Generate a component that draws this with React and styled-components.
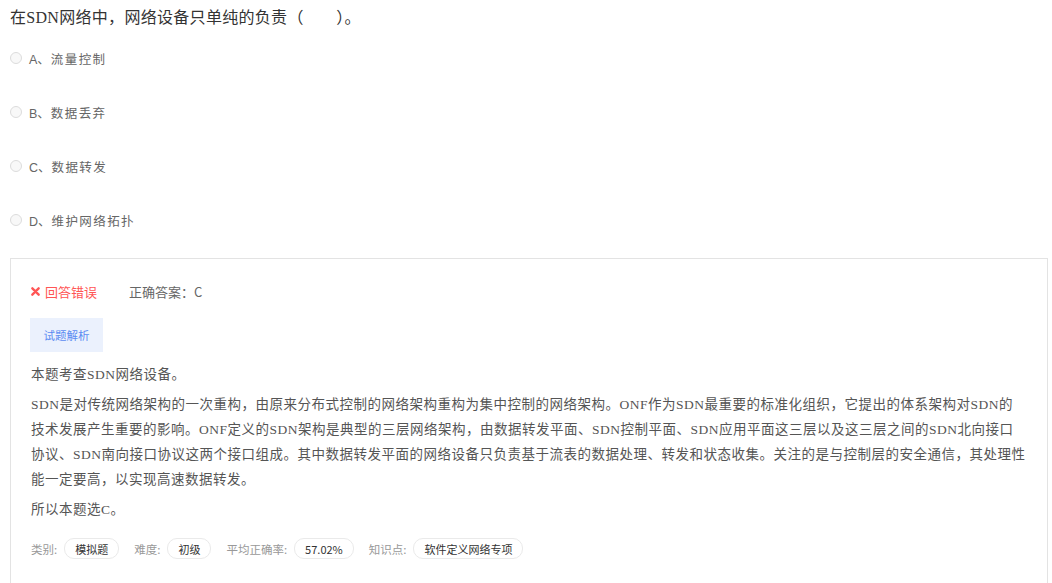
import React from 'react';
import styled, { createGlobalStyle } from 'styled-components';

const GlobalStyle = createGlobalStyle`
  body {
    margin: 0;
    background: #fff;
    font-family: "Liberation Serif", "Noto Sans CJK SC", serif;
  }
`;

const Page = styled.div`
  padding: 0 4px 0 10px;
`;

const Title = styled.div`
  font-size: 16px;
  line-height: 22px;
  color: #333;
  padding-top: 7px;
  letter-spacing: 0.3px;
  font-family: "Liberation Serif", "Noto Sans CJK SC", serif;
`;

const Options = styled.div`
  display: flex;
  flex-direction: column;
  gap: 34px;
  margin-top: 19px;
`;

const Option = styled.label`
  display: flex;
  align-items: center;
  height: 20px;
  font-family: "Liberation Sans", "Noto Sans CJK SC", sans-serif;
  font-size: 12.5px;
  letter-spacing: 1.4px;
  color: #666;
`;

const Radio = styled.span`
  width: 10px;
  height: 10px;
  border: 1px solid #dcdcdc;
  border-radius: 50%;
  background: #f8f8f8;
  margin-right: 7px;
  flex-shrink: 0;
`;

const Letter = styled.span`
  color: #666;
  letter-spacing: 0;
  margin-right: 1px;
`;

const ResultBox = styled.div`
  margin-top: 28px;
  border: 1px solid #e3e3e3;
  border-bottom: none;
  padding: 22px 20px 40px 19px;
  min-height: 300px;
`;

const StatusRow = styled.div`
  display: flex;
  align-items: center;
  height: 20px;
  font-family: "Noto Sans CJK SC", sans-serif;
  font-size: 13px;
`;

const Wrong = styled.span`
  display: flex;
  align-items: center;
  color: #ff5555;
  margin-right: 32px;
  margin-left: 1px;
`;

const Answer = styled.span`
  color: #666;
`;

const AnalysisButton = styled.button`
  margin-top: 17px;
  width: 73px;
  height: 34px;
  border: none;
  background: #ebf1fd;
  color: #5c8cf2;
  font-family: "Noto Sans CJK SC", sans-serif;
  font-size: 11.5px;
  padding: 0;
  cursor: pointer;
`;

const Analysis = styled.div`
  margin-top: 10px;
  padding-left: 1px;
  font-size: 13.5px;
  line-height: 25px;
  letter-spacing: 0.5px;
  color: #555;
  font-family: "Liberation Serif", "Noto Sans CJK SC", serif;

  p {
    margin: 0 0 5px;
  }
`;

const Meta = styled.div`
  display: flex;
  align-items: center;
  margin-top: 16px;
  padding-left: 1px;
  font-family: "Noto Sans CJK SC", sans-serif;
  font-size: 11px;
`;

const MetaLabel = styled.span`
  color: #999;
  font-size: 11.5px;
  margin-right: 7px;
`;

const Pill = styled.span`
  display: inline-flex;
  align-items: center;
  height: 19px;
  padding: 0 10px;
  border: 1px solid #eaeaea;
  border-radius: 10px;
  color: #333;
  margin-right: 15px;
`;

const CrossIcon = () => (
  <svg width="9" height="9" viewBox="0 0 10 10" style={{ marginRight: 5 }}>
    <path d="M1.5 1.5 L8.5 8.5 M8.5 1.5 L1.5 8.5" stroke="#ff5555" strokeWidth="2.6" strokeLinecap="round" />
  </svg>
);

const options = [
  ['A', '流量控制'],
  ['B', '数据丢弃'],
  ['C', '数据转发'],
  ['D', '维护网络拓扑'],
];

const meta = [
  ['类别:', '模拟题'],
  ['难度:', '初级'],
  ['平均正确率:', '57.02%'],
  ['知识点:', '软件定义网络专项'],
];

export default function App() {
  return (
    <>
      <GlobalStyle />
      <Page>
        <Title>在SDN网络中，网络设备只单纯的负责（　　）。</Title>
        <Options>
          {options.map(([k, v]) => (
            <Option key={k}>
              <Radio />
              <Letter>{k}、</Letter>
              {v}
            </Option>
          ))}
        </Options>
        <ResultBox>
          <StatusRow>
            <Wrong>
              <CrossIcon />
              回答错误
            </Wrong>
            <Answer>正确答案：C</Answer>
          </StatusRow>
          <AnalysisButton>试题解析</AnalysisButton>
          <Analysis>
            <p>本题考查SDN网络设备。</p>
            <p>
              SDN是对传统网络架构的一次重构，由原来分布式控制的网络架构重构为集中控制的网络架构。ONF作为SDN最重要的标准化组织，它提出的体系架构对SDN的技术发展产生重要的影响。ONF定义的SDN架构是典型的三层网络架构，由数据转发平面、SDN控制平面、SDN应用平面这三层以及这三层之间的SDN北向接口协议、SDN南向接口协议这两个接口组成。其中数据转发平面的网络设备只负责基于流表的数据处理、转发和状态收集。关注的是与控制层的安全通信，其处理性能一定要高，以实现高速数据转发。
            </p>
            <p>所以本题选C。</p>
          </Analysis>
          <Meta>
            {meta.map(([l, v]) => (
              <React.Fragment key={l}>
                <MetaLabel>{l}</MetaLabel>
                <Pill>{v}</Pill>
              </React.Fragment>
            ))}
          </Meta>
        </ResultBox>
      </Page>
    </>
  );
}
